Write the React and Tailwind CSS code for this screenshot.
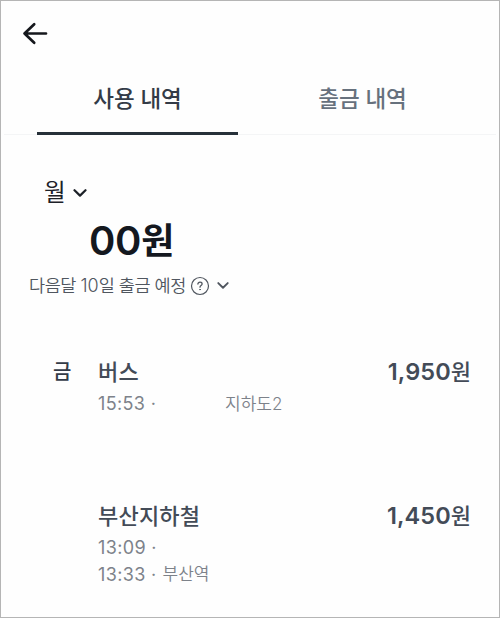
import React from 'react';

const TABS = [
  { id: 'usage', label: '사용 내역', active: true },
  { id: 'withdraw', label: '출금 내역', active: false },
];

const ArrowLeft = () => (
  <svg width="26" height="24" viewBox="0 0 26 24" fill="none" stroke="#15171c" strokeWidth="2.7" strokeLinecap="round" strokeLinejoin="round">
    <path d="M24 11.5H2.5M12.2 2.3L2.5 11.5L12.2 20.7" />
  </svg>
);

const Chevron = ({ className }) => (
  <svg className={className} viewBox="0 0 14 8" fill="none" stroke="currentColor" strokeWidth="2.2" strokeLinecap="round" strokeLinejoin="round">
    <path d="M1.5 1.2L7 6.6L12.5 1.2" />
  </svg>
);

const HelpIcon = () => (
  <svg width="20" height="20" viewBox="0 0 20 20" fill="none" stroke="#50565f" strokeLinecap="round" strokeLinejoin="round">
    <circle cx="10" cy="10" r="8.5" strokeWidth="1.2" />
    <path d="M7.9 8.1C7.9 6.9 8.8 6.2 10 6.2C11.2 6.2 12.1 6.9 12.1 8C12.1 9.5 10 9.7 10 11.2" strokeWidth="1.3" />
    <circle cx="10" cy="13.6" r="0.35" strokeWidth="1" />
  </svg>
);

const Tab = ({ label, active }) => (
  <button
    className={`h-[75px] w-[201px] pt-[6px] text-[22.5px] font-medium tracking-[-0.1px] ${
      active ? 'border-b-[3px] border-[#263039] text-[#333b47]' : 'border-b-[3px] border-transparent text-[#67717d]'
    }`}
  >
    {label}
  </button>
);

const Time = ({ children }) => <span className="text-[18px] font-[370] tracking-[0.35px]">{children}</span>;

const HistoryItem = ({ day, title, amount, children }) => (
  <div className="flex pr-[28px] pl-[52px]">
    <div className="w-[45px] text-[20px] leading-[30px] font-medium text-[#333b47]">{day}</div>
    <div className="flex-1">
      <div className="flex h-[30px] justify-between text-[22px] leading-[30px] font-medium text-[#434b57]">
        <span className="tracking-[0.2px]">{title}</span>
        <span className="flex">
          <span className="text-[23.5px] font-[580] tracking-[0.1px]">{amount}</span>
          <span>원</span>
        </span>
      </div>
      {children}
    </div>
  </div>
);

const App = () => (
  <div className="flex h-[618px] w-[500px] flex-col border border-[#b5b5b5] bg-[#fefefe] font-[Inter,'Noto_Sans_CJK_KR',sans-serif] whitespace-nowrap">
    {/* header */}
    <header className="flex h-[59px] items-center pt-[6px] pl-[21px]">
      <ArrowLeft />
    </header>

    {/* tabs */}
    <nav className="mx-[3px] flex h-[75px] gap-[24px] pl-[33px] shadow-[inset_0_-1px_0_#f4f5f6]">
      {TABS.map((tab) => (
        <Tab key={tab.id} label={tab.label} active={tab.active} />
      ))}
    </nav>

    {/* monthly summary */}
    <section className="pt-[43px]">
      <div className="flex h-[30px] items-center gap-[7px] pl-[43px] text-[#1d2128]">
        <span className="text-[23.5px] leading-[30px]">월</span>
        <Chevron className="mb-px h-[8px] w-[14px]" />
      </div>
      <div className="flex h-[61px] items-center pt-[4px] pl-[88px] text-[#14181f]">
        <span className="text-[40px] leading-[60px] font-[570] tracking-[-0.3px]">00</span>
        <span className="text-[36px] leading-[60px] font-bold">원</span>
      </div>
      <div className="flex h-[31px] items-center pt-[2px] pl-[28px] text-[#50565f]">
        <span className="text-[17.5px] leading-[30px] font-[350] tracking-[-0.45px]">
          다음달 <span className="text-[18px] tracking-normal">10</span>일 출금 예정
        </span>
        <span className="ml-[4px]">
          <HelpIcon />
        </span>
        <Chevron className="ml-[7px] h-[7px] w-[12px]" />
      </div>
    </section>

    {/* history */}
    <section className="pt-[57px] font-[350]">
      <HistoryItem day="금" title="버스" amount="1,950">
        <div className="flex h-[30px] items-center pt-[4px] text-[17px] text-[#7d828a]">
          <span className="w-[127px]">
            <Time>15:53 ·</Time>
          </span>
          <span className="pt-px">지하도2</span>
        </div>
      </HistoryItem>
      <div className="pt-[84px]">
        <HistoryItem title="부산지하철" amount="1,450">
          <div className="flex h-[30px] items-center pt-[3px] text-[17px] text-[#7d828a]">
            <Time>13:09 ·</Time>
          </div>
          <div className="flex h-[26px] items-center gap-[6px] pt-px text-[17px] text-[#7d828a]">
            <Time>13:33 ·</Time>
            <span className="pt-px">부산역</span>
          </div>
        </HistoryItem>
      </div>
    </section>
  </div>
);

export default App;
